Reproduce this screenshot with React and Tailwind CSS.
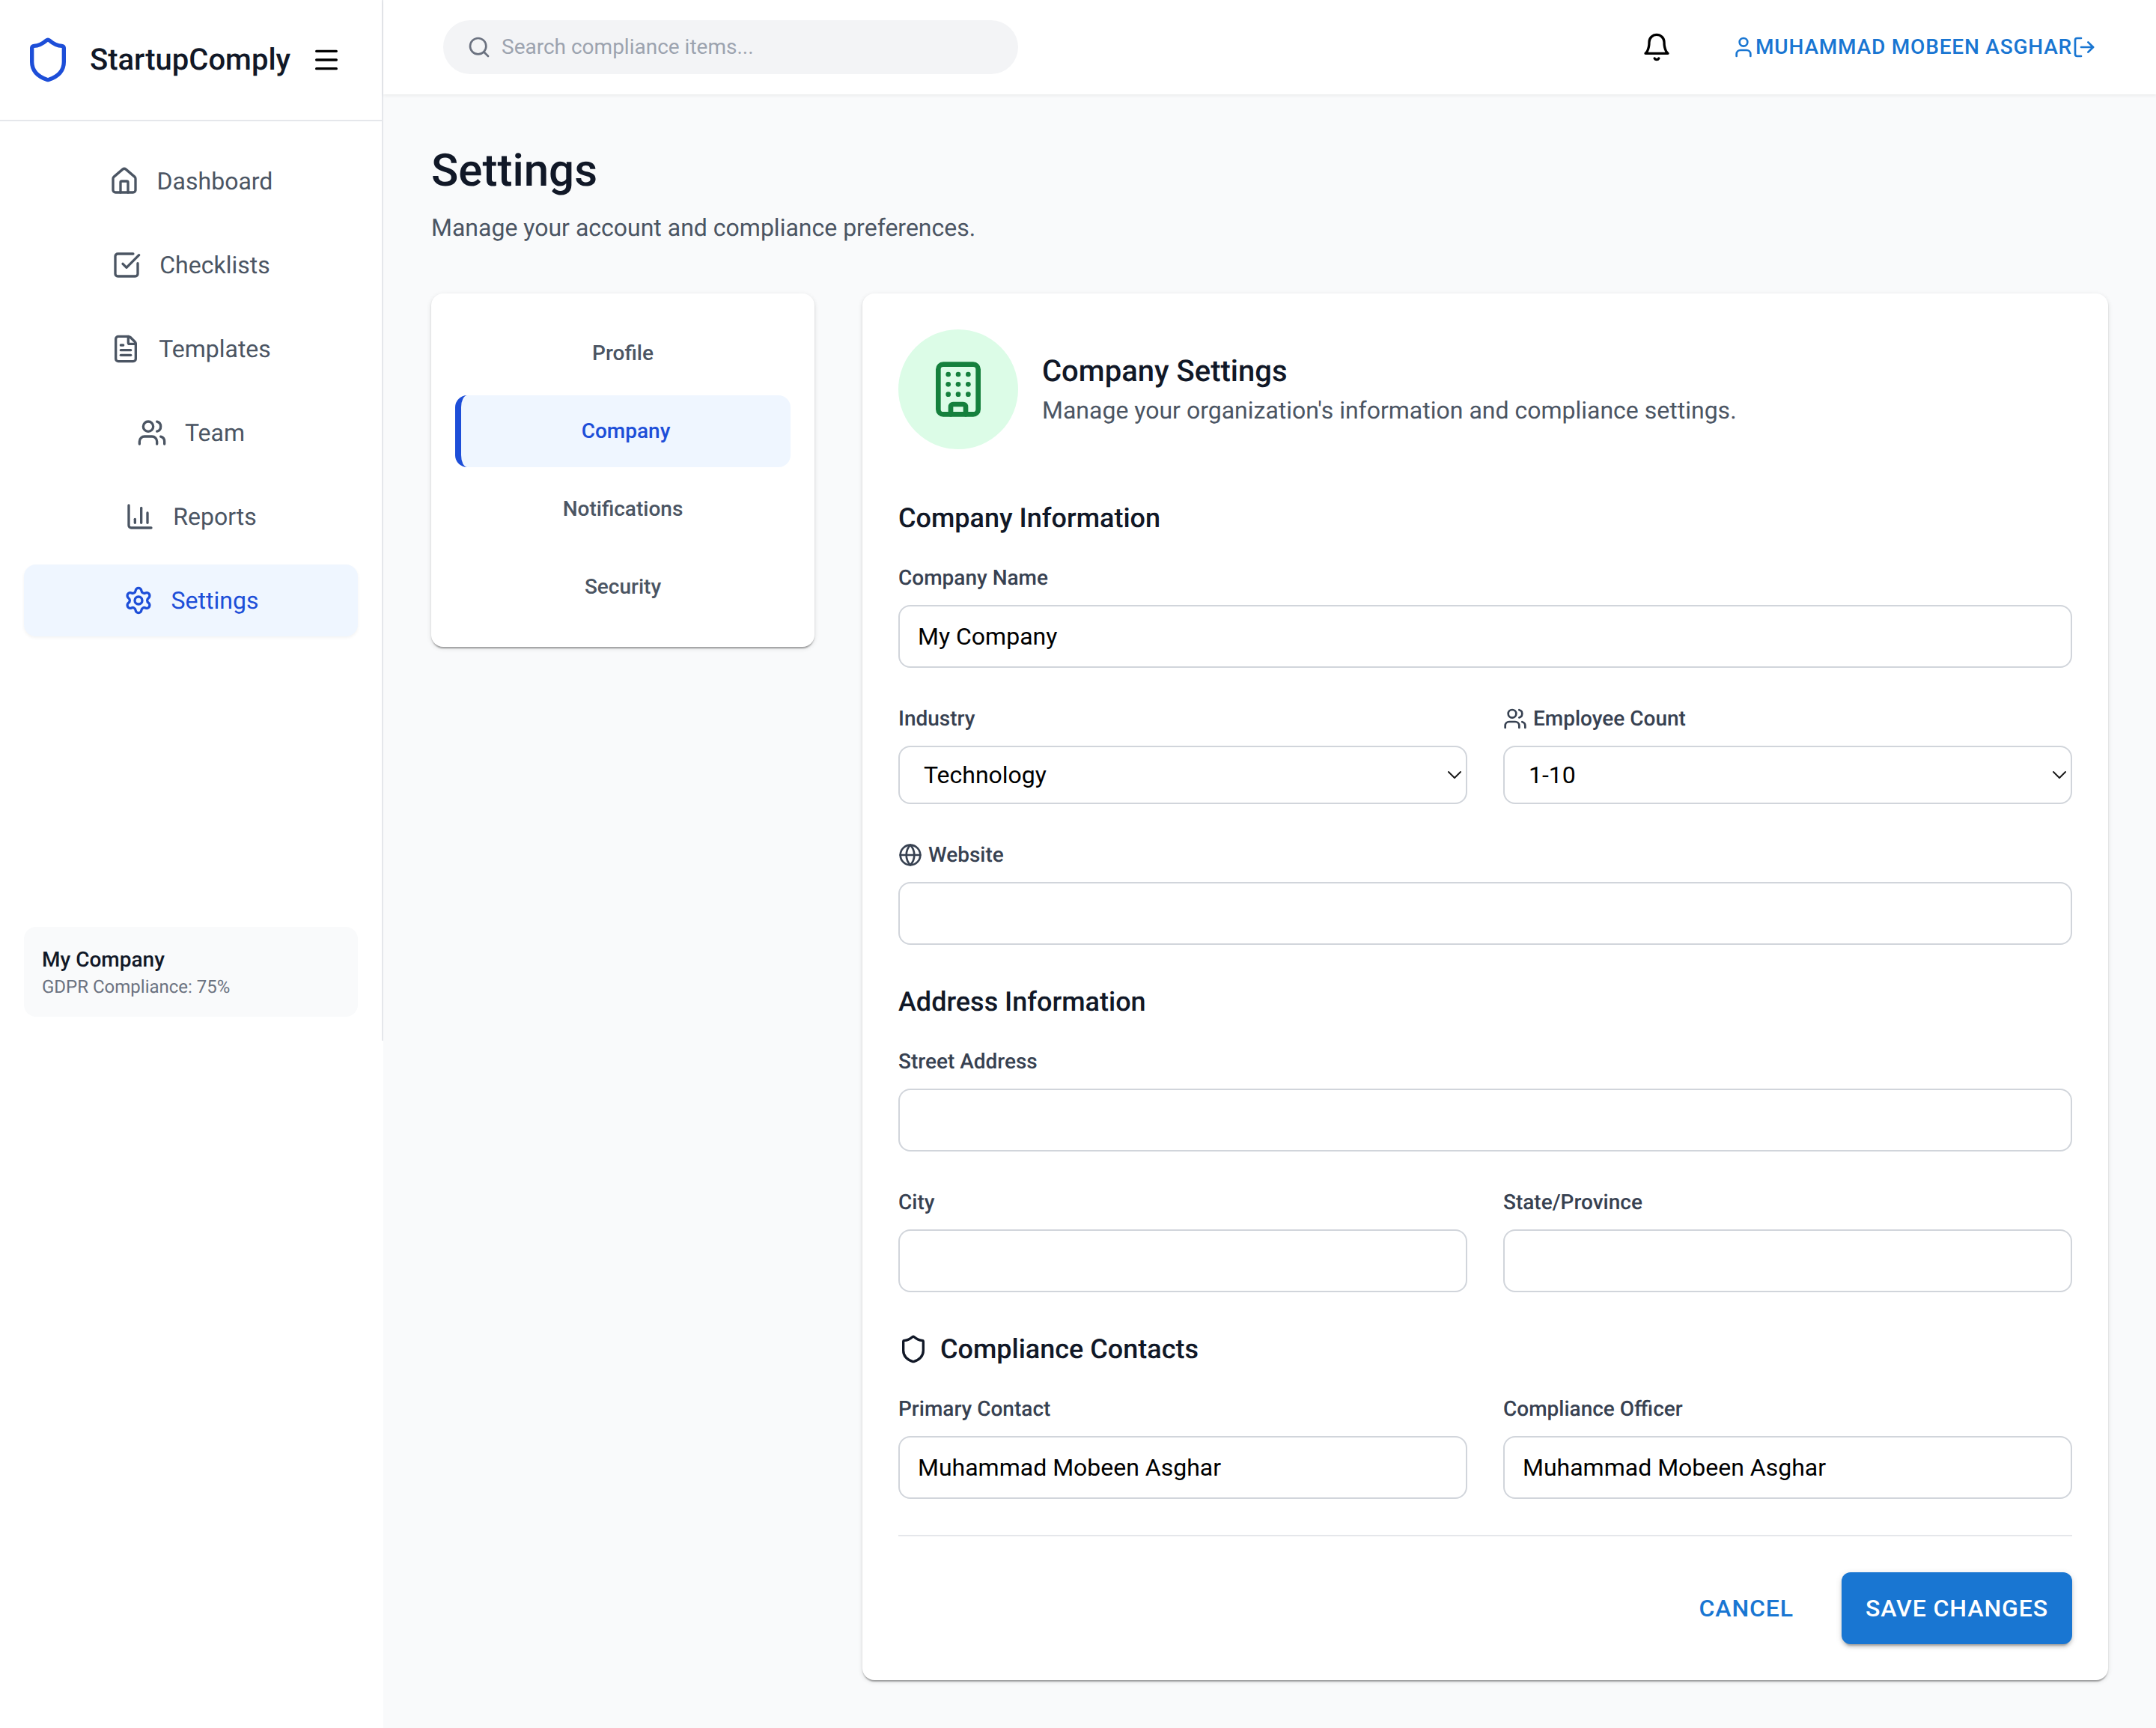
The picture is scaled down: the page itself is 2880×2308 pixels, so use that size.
import {
  Building,
  ChartColumn,
  ChevronDown,
  FileText,
  Globe,
  House,
  LogOut,
  Menu,
  Search,
  Settings,
  Shield,
  SquareCheckBig,
  User,
  Users,
} from 'lucide-react'

const navItems = [
  { label: 'Dashboard', icon: House },
  { label: 'Checklists', icon: SquareCheckBig },
  { label: 'Templates', icon: FileText },
  { label: 'Team', icon: Users },
  { label: 'Reports', icon: ChartColumn },
  { label: 'Settings', icon: Settings, active: true },
]

const tabs = ['Profile', 'Company', 'Notifications', 'Security']

const cardShadow = 'shadow-[0_4px_2px_-2px_rgba(0,0,0,0.2),0_2px_2px_0_rgba(0,0,0,0.14),0_2px_6px_0_rgba(0,0,0,0.12)]'

const inputClass =
  'w-full h-[84px] px-6 border-2 border-[#d1d5db] rounded-2xl bg-white text-[32px] text-black outline-none'

// older lucide bell, the current one has a different outline
function BellIcon() {
  return (
    <svg width="40" height="40" viewBox="0 0 24 24" fill="none" stroke="black" strokeWidth="2" strokeLinecap="round" strokeLinejoin="round">
      <path d="M6 8a6 6 0 0 1 12 0c0 7 3 9 3 9H3s3-2 3-9" />
      <path d="M10.3 21a1.94 1.94 0 0 0 3.4 0" />
    </svg>
  )
}

function Label({ children }) {
  return (
    <label className="flex items-center gap-2 h-10 mb-4 text-[28px] leading-10 font-medium text-[#374151]">
      {children}
    </label>
  )
}

function Field({ label, value = '' }) {
  return (
    <div>
      <Label>{label}</Label>
      <input className={inputClass} defaultValue={value} />
    </div>
  )
}

function SelectField({ label, options }) {
  return (
    <div>
      <Label>{label}</Label>
      <div className="relative">
        <select className="w-full h-[78px] pl-8 pr-12 border-2 border-[#d1d5db] rounded-2xl bg-white text-[32px] text-black outline-none appearance-none">
          {options.map((o) => (
            <option key={o}>{o}</option>
          ))}
        </select>
        <ChevronDown size={32} strokeWidth={1.5} className="absolute right-px top-[23px] text-[#1a1a1a]" />
      </div>
    </div>
  )
}

function SectionTitle({ children }) {
  return <h3 className="flex items-center gap-4 h-14 mb-8 text-[36px] leading-14 font-medium text-[#111827]">{children}</h3>
}

export default function App() {
  return (
    <div className="flex w-[2880px] min-h-[2308px] bg-white font-['Roboto',sans-serif] [text-rendering:geometricPrecision]">
      {/* Sidebar */}
      <aside className="flex flex-col w-[512px] h-[1390px] shrink-0 border-r-2 border-[#e5e7eb] bg-white">
        <div className="flex items-center h-[162px] pl-8 border-b-2 border-[#e5e7eb]">
          <Shield size={64} strokeWidth={2} className="text-[#1d4ed8]" />
          <span className="ml-6 text-[40px] font-medium text-[#111827]">StartupComply</span>
          <Menu size={40} strokeWidth={2} className="ml-auto mr-[54px] text-black" />
        </div>
        <nav className="flex flex-col gap-4 px-8 pt-8">
          {navItems.map(({ label, icon: Icon, active }) => (
            <a
              key={label}
              className={`flex items-center justify-center gap-6 h-24 rounded-2xl text-[32px] ${
                active ? 'bg-[#eff6ff] text-[#1d4ed8] shadow-[0_2px_4px_rgba(0,0,0,0.05)]' : 'text-[#4b5563]'
              }`}
            >
              <Icon size={40} strokeWidth={2} />
              {label}
            </a>
          ))}
        </nav>
        <div className="mt-auto mx-8 mb-8 h-[120px] px-6 py-6 rounded-2xl bg-[#f9fafb]">
          <p className="text-[28px] leading-10 font-medium text-[#111827]">My Company</p>
          <p className="text-[24px] leading-8 text-[#6b7280]">GDPR Compliance: 75%</p>
        </div>
      </aside>

      <main className="flex flex-col flex-1 bg-[#f9fafb]">
        {/* Top bar */}
        <header className="flex items-center justify-between h-[126px] pl-20 pr-16 bg-white shadow-[0_2px_4px_rgba(0,0,0,0.06)]">
          <div className="flex items-center gap-[14px] w-[768px] h-[72px] px-8 rounded-full bg-[#f3f4f6]">
            <Search size={32} strokeWidth={2} className="text-[#6b7280]" />
            <input
              className="flex-1 bg-transparent text-[28px] text-[#374151] placeholder:text-[#9ca3af] outline-none"
              placeholder="Search compliance items..."
            />
          </div>
          <div className="flex items-center gap-16">
            <BellIcon />
            <button className="flex items-center px-4 h-[72px] text-[28px] font-medium uppercase tracking-[0.02857em] text-[#1976d2]">
              <User size={32} strokeWidth={2} />
              Muhammad Mobeen Asghar
              <LogOut size={32} strokeWidth={2} />
            </button>
          </div>
        </header>

        <div className="flex-1 px-16 pb-16 pt-[66px]">
          <h1 className="text-[60px] leading-[72px] font-medium text-[#111827]">Settings</h1>
          <p className="mt-4 mb-16 text-[32px] leading-12 text-[#4b5563]">Manage your account and compliance preferences.</p>

          <div className="flex items-start gap-16">
            {/* Tabs */}
            <div className={`flex flex-col gap-2 w-[512px] p-8 rounded-2xl bg-white ${cardShadow}`}>
              {tabs.map((t) => (
                <button
                  key={t}
                  className={`h-24 rounded-2xl text-[28px] font-medium ${
                    t === 'Company' ? 'bg-[#eff6ff] text-[#1d4ed8] border-l-8 border-[#1d4ed8]' : 'text-[#4b5563]'
                  }`}
                >
                  {t}
                </button>
              ))}
            </div>

            {/* Company form */}
            <div className={`flex-1 p-12 rounded-2xl bg-white ${cardShadow}`}>
              <div className="flex items-center gap-8 mb-16">
                <div className="flex items-center justify-center w-40 h-40 rounded-full bg-[#dcfce7]">
                  <Building size={80} strokeWidth={2} className="text-[#15803d]" />
                </div>
                <div>
                  <h2 className="text-[40px] leading-14 font-medium text-[#111827]">Company Settings</h2>
                  <p className="text-[32px] leading-12 text-[#4b5563]">Manage your organization's information and compliance settings.</p>
                </div>
              </div>

              <SectionTitle>Company Information</SectionTitle>
              <div className="flex flex-col gap-12">
                <Field label="Company Name" value="My Company" />
                <div className="grid grid-cols-2 gap-12">
                  <SelectField label="Industry" options={['Technology', 'Finance', 'Healthcare']} />
                  <SelectField
                    label={
                      <>
                        <Users size={32} strokeWidth={2} />
                        Employee Count
                      </>
                    }
                    options={['1-10', '11-50', '51-200']}
                  />
                </div>
                <Field
                  label={
                    <>
                      <Globe size={32} strokeWidth={2} />
                      Website
                    </>
                  }
                />
              </div>

              <div className="mt-12">
                <SectionTitle>Address Information</SectionTitle>
                <div className="flex flex-col gap-12">
                  <Field label="Street Address" />
                  <div className="grid grid-cols-2 gap-12">
                    <Field label="City" />
                    <Field label="State/Province" />
                  </div>
                </div>
              </div>

              <div className="mt-12">
                <SectionTitle>
                  <Shield size={40} strokeWidth={2} />
                  Compliance Contacts
                </SectionTitle>
                <div className="grid grid-cols-2 gap-12">
                  <Field label="Primary Contact" value="Muhammad Mobeen Asghar" />
                  <Field label="Compliance Officer" value="Muhammad Mobeen Asghar" />
                </div>
              </div>

              <div className="flex justify-end items-center gap-8 mt-12 pt-12 border-t-2 border-[#e5e7eb]">
                <button className="h-24 px-8 text-[32px] font-medium uppercase tracking-[0.02857em] text-[#1976d2]">Cancel</button>
                <button className="h-24 px-8 rounded-xl bg-[#1976d2] text-[32px] font-medium uppercase tracking-[0.02857em] text-white shadow-[0_6px_2px_-4px_rgba(0,0,0,0.2),0_4px_4px_0_rgba(0,0,0,0.14),0_2px_10px_0_rgba(0,0,0,0.12)]">
                  Save Changes
                </button>
              </div>
            </div>
          </div>
        </div>
      </main>
    </div>
  )
}
